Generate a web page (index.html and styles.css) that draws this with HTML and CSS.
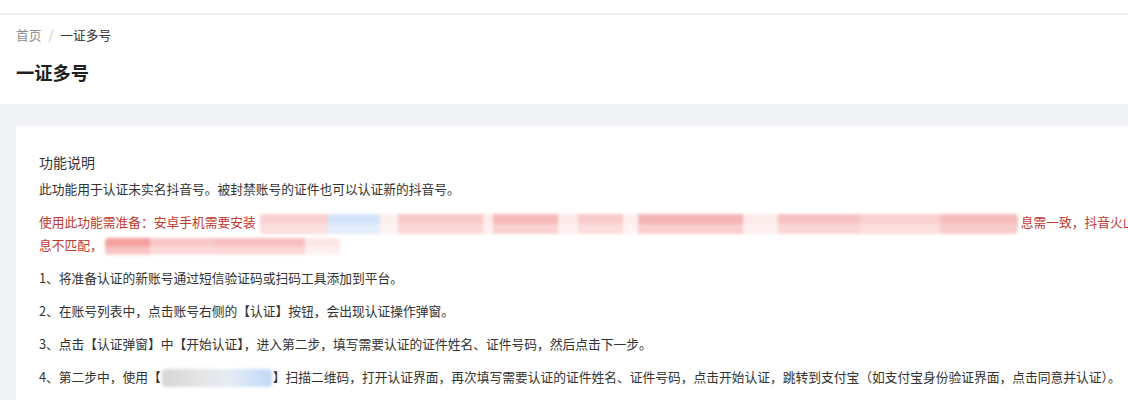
FILE: index.html
```html
<!DOCTYPE html>
<html lang="zh-CN">
<head>
<meta charset="utf-8">
<title>一证多号</title>
<link rel="stylesheet" href="styles.css">
</head>
<body>
<div class="page">
  <div class="topbar"></div>
  <header class="page-header">
    <nav class="breadcrumb">
      <span class="crumb-link">首页</span>
      <span class="crumb-sep">/</span>
      <span class="crumb-current">一证多号</span>
    </nav>
    <h1 class="page-title">一证多号</h1>
  </header>
  <main class="content">
    <section class="card">
      <h2 class="card-title">功能说明</h2>
      <p class="line">此功能用于认证未实名抖音号。被封禁账号的证件也可以认证新的抖音号。</p>
      <p class="line warn">使用此功能需准备：安卓手机需要安装<span class="mosaic mosaic-a"></span>息需一致，抖音火山版登录的账号实名信<br>息不匹配，<span class="mosaic mosaic-b"></span></p>
      <p class="line">1、将准备认证的新账号通过短信验证码或扫码工具添加到平台。</p>
      <p class="line">2、在账号列表中，点击账号右侧的【认证】按钮，会出现认证操作弹窗。</p>
      <p class="line">3、点击【认证弹窗】中【开始认证】，进入第二步，填写需要认证的证件姓名、证件号码，然后点击下一步。</p>
      <p class="line">4、第二步中，使用【<span class="mosaic mosaic-c"></span>】扫描二维码，打开认证界面，再次填写需要认证的证件姓名、证件号码，点击开始认证，跳转到支付宝（如支付宝身份验证界面，点击同意并认证）。</p>
    </section>
  </main>
</div>
</body>
</html>
```
FILE: styles.css
```css
html, body {
  margin: 0;
  padding: 0;
  overflow: hidden;
  background: #ffffff;
}

body {
  font-family: "Noto Sans CJK SC", "Noto Sans", "Liberation Sans", sans-serif;
  color: #333333;
}

.page {
  width: 1240px;
  min-height: 400px;
  background: #f0f2f5;
}

.topbar {
  height: 13px;
  background: #ffffff;
  border-bottom: 2px solid #eff0f3;
}

.page-header {
  background: #ffffff;
  padding: 10px 16px 19px;
}

.breadcrumb {
  display: flex;
  align-items: center;
  gap: 6px;
  font-size: 12.7px;
  line-height: 20px;
}

.crumb-link {
  color: #8c8c8c;
}

.crumb-sep {
  color: #c5c5c5;
  margin: 0 1px;
}

.crumb-current {
  color: #333333;
}

.page-title {
  margin: 14px 0 0;
  font-size: 18.3px;
  line-height: 26px;
  font-weight: 700;
  color: #1f1f1f;
}

.content {
  padding: 22px 16px 0;
}

.card {
  background: #ffffff;
  padding: 25px 23px 40px;
  min-height: 260px;
}

.card-title {
  margin: 0 0 5px;
  font-size: 14px;
  line-height: 22px;
  font-weight: 400;
  color: #333333;
}

.line {
  margin: 12px 0 0;
  font-size: 12.75px;
  line-height: 21px;
  white-space: nowrap;
  color: #333333;
}

.card-title + .line {
  margin-top: 5px;
}

.warn {
  color: #bf3a31;
}

.mosaic {
  display: inline-block;
  vertical-align: middle;
  filter: blur(1.4px);
  border-radius: 4px;
}

.mosaic-a {
  width: 758px;
  height: 20px;
  margin: 0 3px 0 4px;
  background:
    linear-gradient(to right,
      #f9d0d0 0 68px, #d3e3fa 68px 120px, #fdeeee 120px 138px,
      #f8c9c9 138px 223px, #fdeaea 223px 233px, #f6b9b9 233px 298px,
      #fde8e8 298px 318px, #f9cbcb 318px 363px, #feefef 363px 378px,
      #f5b5b5 378px 483px, #fdeaea 483px 518px, #f8c2c2 518px 600px,
      #fad0d0 600px 680px, #f7bdbd 680px 758px) top / 100% 50% no-repeat,
    linear-gradient(to right,
      #fbdede 0 68px, #e3edfb 68px 120px, #fef3f3 120px 138px,
      #fbd8d8 138px 223px, #fef0f0 223px 233px, #fad2d2 233px 298px,
      #fef0f0 298px 318px, #fcdcdc 318px 363px, #fff3f3 363px 378px,
      #f9cfcf 378px 483px, #fef0f0 483px 518px, #fad6d6 518px 600px,
      #fcdede 600px 680px, #f9cccc 680px 758px) bottom / 100% 50% no-repeat;
}

.mosaic-b {
  width: 235px;
  height: 17px;
  margin-left: 2px;
  background:
    linear-gradient(to right,
      #f4a0a0 0 45px, #f9c6c6 45px 110px, #f8c0c0 110px 200px, #fde6e6 200px 235px) top / 100% 50% no-repeat,
    linear-gradient(to right,
      #f9c4c4 0 45px, #fcdada 45px 110px, #fbd6d6 110px 200px, #fef0f0 200px 235px) bottom / 100% 50% no-repeat;
}

.mosaic-c {
  width: 110px;
  height: 18px;
  margin: 0 1px;
  background:
    linear-gradient(to right, #d6d6d6 0, #e4e4e4 35%, #e6ecf5 60%, #d2e2f7 80%, #c3d9f6 100%);
}
```
